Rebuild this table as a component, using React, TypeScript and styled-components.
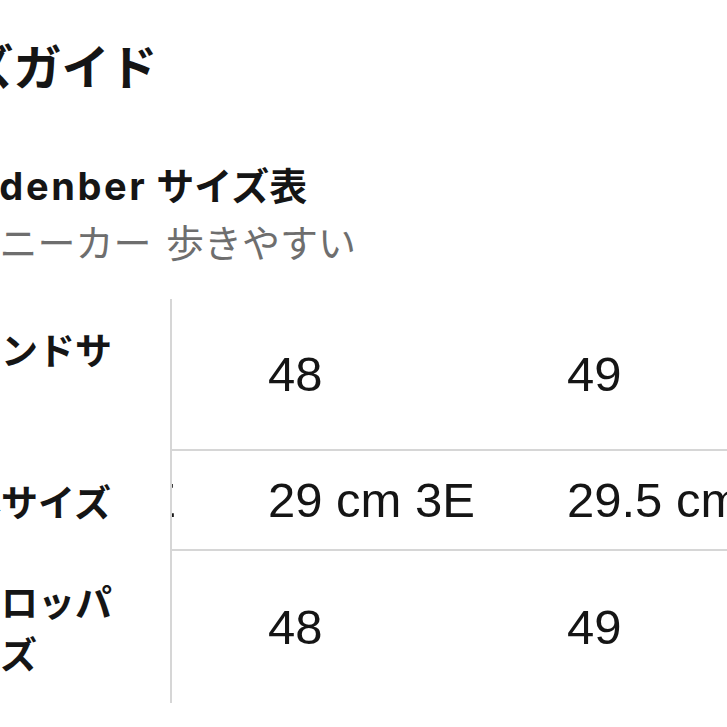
import React, { useLayoutEffect, useRef } from "react";
import styled, { createGlobalStyle } from "styled-components";

const GlobalStyle = createGlobalStyle`
  html, body {
    margin: 0;
    padding: 0;
    background: #ffffff;
    overflow: hidden;
  }
  body {
    font-family: "Liberation Sans", "Noto Sans CJK JP", sans-serif;
    color: #111111;
  }
`;

const Page = styled.main`
  width: 1100px;
  margin-left: -129px;
  padding-top: 30px;
  display: flex;
  flex-direction: column;
`;

const Title = styled.h1`
  margin: 0;
  font-family: "Noto Sans CJK JP", sans-serif;
  font-size: 48px;
  line-height: 68px;
  font-weight: 700;
  color: #151515;
`;

const Heading = styled.h2`
  margin: 62px 0 0;
  font-family: Inter, "Noto Sans CJK JP", sans-serif;
  font-size: 38px;
  line-height: 52px;
  font-weight: 700;
  color: #151515;
  white-space: nowrap;
`;

const Brand = styled.span`
  letter-spacing: 2.6px;
`;

const Subtitle = styled.p`
  margin: 3px 0 0;
  font-family: "Noto Sans CJK JP", sans-serif;
  font-size: 38px;
  line-height: 52px;
  font-weight: 400;
  color: #6e6e6e;
  white-space: nowrap;
  word-spacing: 6px;
`;

const Scroller = styled.div`
  margin-top: 32px;
  width: 1100px;
  overflow-x: auto;
  scrollbar-width: none;
  &::-webkit-scrollbar {
    display: none;
  }
`;

const Table = styled.div`
  display: grid;
  grid-template-columns: 301px repeat(4, 299px);
  width: max-content;
`;

const LabelCell = styled.div`
  position: sticky;
  left: 0;
  z-index: 1;
  background: #ffffff;
  box-sizing: border-box;
  padding: 24px 30px 24px 56px;
  border-right: 2px solid #d6d6d6;
  font-family: "Noto Sans CJK JP", sans-serif;
  font-size: 37px;
  line-height: 52px;
  font-weight: 700;
  color: #151515;
  display: flex;
  align-items: center;
`;

const ValueCell = styled.div<{ $last?: boolean }>`
  box-sizing: border-box;
  padding: 0 0 0 40px;
  border-bottom: ${(p) => (p.$last ? "none" : "2px solid #d6d6d6")};
  font-family: "Liberation Sans", sans-serif;
  font-size: 49px;
  font-weight: 400;
  color: #151515;
  white-space: nowrap;
  display: flex;
  align-items: center;
`;

const rows: { label: string; values: string[] }[] = [
  { label: "ブランドサイズ", values: ["47", "48", "49", "50"] },
  { label: "日本サイズ", values: ["28 cm 3E", "29 cm 3E", "29.5 cm 3E", "30 cm 3E"] },
  { label: "ヨーロッパサイズ", values: ["47", "48", "49", "50"] },
];

export default function App() {
  const scrollRef = useRef<HTMLDivElement>(null);

  useLayoutEffect(() => {
    if (scrollRef.current) scrollRef.current.scrollLeft = 243;
  }, []);

  return (
    <>
      <GlobalStyle />
      <Page>
        <Title>サイズガイド</Title>
        <Heading>
          <Brand>Rosendenber</Brand> サイズ表
        </Heading>
        <Subtitle>軽量 スニーカー 歩きやすい</Subtitle>
        <Scroller ref={scrollRef}>
          <Table>
            {rows.map((row, ri) => (
              <React.Fragment key={row.label}>
                <LabelCell>{row.label}</LabelCell>
                {row.values.map((v, vi) => (
                  <ValueCell key={vi} $last={ri === rows.length - 1}>
                    {v}
                  </ValueCell>
                ))}
              </React.Fragment>
            ))}
          </Table>
        </Scroller>
      </Page>
    </>
  );
}
